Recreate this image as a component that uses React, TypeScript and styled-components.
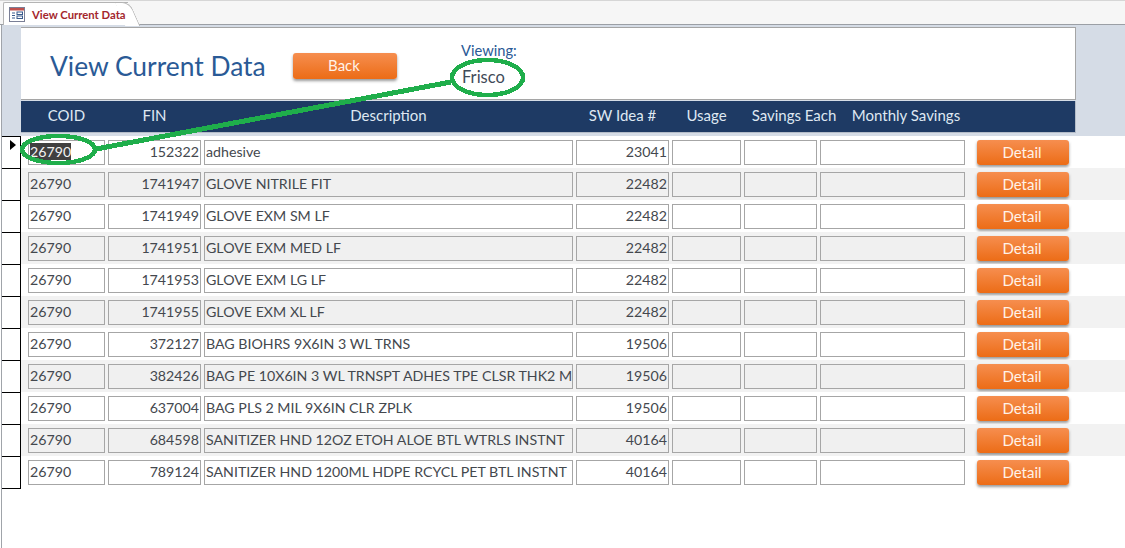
import React from 'react';
import styled, { createGlobalStyle } from 'styled-components';

const GlobalStyle = createGlobalStyle`
  html, body { margin: 0; padding: 0; background: #fff; }
  body { font-family: Lato, "Open Sans", "Liberation Sans", sans-serif; overflow: hidden; }
`;

const COLUMNS = '77px 93px 369px 93px 69px 73px 145px 92px';
const NAV_COLUMNS = '77px 93px 369px 93px 69px 100px 118px';

const Page = styled.div`
  position: relative;
  width: 1125px;
  height: 548px;
  overflow: hidden;
  background: #fff;
`;

const TabStrip = styled.div`
  height: 25px;
  box-sizing: border-box;
  padding: 1px 0 0 3px;
  background: #f6f6f6;
  border-top: 1px solid #d6d6d6;
  border-bottom: 1px solid #9b9fa5;
  display: flex;
  align-items: flex-start;
`;

const Tab = styled.div`
  position: relative;
  width: 125px;
  height: 23px;
  box-sizing: border-box;
  padding-left: 5px;
  display: flex;
  align-items: center;
  gap: 7px;
  background: #fff;
  border: 1px solid #b4b4b4;
  border-right: none;
  border-bottom: none;
  border-radius: 2px 0 0 0;
  color: #a4262c;
  font-size: 11.3px;
  font-weight: 700;
  white-space: nowrap;

  &::after {
    content: '';
    position: absolute;
    top: -1px;
    right: -7px;
    width: 14px;
    height: 23px;
    background: #fff;
    border-top: 1px solid #b4b4b4;
    border-right: 1px solid #b4b4b4;
    border-top-right-radius: 8px;
    transform: skewX(24deg);
    z-index: 0;
  }
`;

const TabText = styled.span`
  position: relative;
  z-index: 1;
`;

const Body = styled.div`
  margin-left: 1px;
  border-left: 1px solid #a0a4aa;
  height: 523px;
`;

const HeaderBand = styled.div`
  background: #d5dce6;
  padding: 2px 49px 3px 19px;
`;

const FormHeader = styled.div`
  height: 73px;
  box-sizing: border-box;
  background: #fff;
  border: 1px solid #a5a5a5;
  border-left: none;
  padding-left: 29px;
  display: flex;
  align-items: center;
`;

const Title = styled.h1`
  margin: 5px 0 0;
  width: 243px;
  font-size: 26.4px;
  font-weight: 400;
  color: #2a5a96;
  white-space: nowrap;
`;

const OrangeButton = styled.button<{ $wide?: boolean }>`
  width: ${p => (p.$wide ? 104 : 92)}px;
  height: ${p => (p.$wide ? 26 : 25)}px;
  padding: 0 2px 2px 0;
  border: none;
  border-radius: 3px;
  background: linear-gradient(#f68e4f, #ec6c16);
  box-shadow: 0 2px 3px rgba(70, 70, 70, 0.55);
  color: #fff2e8;
  font-family: inherit;
  font-size: 15px;
`;

const BackButton = styled(OrangeButton)`
  margin-top: 4px;
`;

const Viewing = styled.div`
  margin-left: 64px;
  display: flex;
  flex-direction: column;
  gap: 8px;
`;

const ViewingLabel = styled.span`
  font-size: 14.7px;
  color: #2a5a96;
`;

const ViewingValue = styled.span`
  margin-left: 1px;
  font-size: 16.5px;
  color: #3f4a58;
`;

const NavBar = styled.div`
  height: 32px;
  box-sizing: border-box;
  margin-top: 1px;
  padding: 0 0 3px 7px;
  background: #1e3a64;
  border-right: 1px solid #b4bcc8;
  border-bottom: 1px solid #b4bcc8;
  display: grid;
  grid-template-columns: ${NAV_COLUMNS};
  column-gap: 3px;
  align-items: center;
  color: #dfe8f2;
  font-size: 15px;
`;

const NavLabel = styled.span`
  text-align: center;
  white-space: nowrap;
`;

const Row = styled.div`
  display: flex;
  height: 32px;
`;

const Selector = styled.div`
  width: 19px;
  flex: none;
  box-sizing: border-box;
  border-top: 1px solid #000;
  border-right: 1px solid #000;
  display: flex;
  padding-top: 3px;
`;

const Arrow = styled.div`
  width: 0;
  height: 0;
  margin-left: 8px;
  border-left: 6px solid #000;
  border-top: 5px solid transparent;
  border-bottom: 5px solid transparent;
`;

const SelectorEnd = styled.div`
  width: 19px;
  height: 1px;
  background: #000;
`;

const Cells = styled.div<{ $alt: boolean }>`
  flex: 1;
  box-sizing: border-box;
  padding: 4px 0 0 7px;
  background: ${p => (p.$alt ? '#f2f2f2' : '#fff')};
  display: grid;
  grid-template-columns: ${COLUMNS};
  grid-template-rows: 25px;
  column-gap: 3px;
`;

const Field = styled.div<{ $alt: boolean; $right?: boolean }>`
  box-sizing: border-box;
  padding: 0 1px;
  background: ${p => (p.$alt ? '#f0f0f0' : '#fff')};
  border: 1px solid #a6a6a6;
  color: #44484e;
  font-size: 14.2px;
  line-height: 22px;
  text-align: ${p => (p.$right ? 'right' : 'left')};
  white-space: nowrap;
  overflow: hidden;
`;

const Selected = styled.span`
  background: #404040;
  color: #f2f2f2;
`;

const DetailButton = styled(OrangeButton)`
  margin-left: 9px;
`;

const Annotation = styled.svg`
  position: absolute;
  left: 0;
  top: 0;
  pointer-events: none;
`;

const rows: [string, string, string][] = [
  ['152322', 'adhesive', '23041'],
  ['1741947', 'GLOVE NITRILE FIT', '22482'],
  ['1741949', 'GLOVE EXM SM LF', '22482'],
  ['1741951', 'GLOVE EXM MED LF', '22482'],
  ['1741953', 'GLOVE EXM LG LF', '22482'],
  ['1741955', 'GLOVE EXM XL LF', '22482'],
  ['372127', 'BAG BIOHRS 9X6IN 3 WL TRNS', '19506'],
  ['382426', 'BAG PE 10X6IN 3 WL TRNSPT ADHES TPE CLSR THK2 MIL', '19506'],
  ['637004', 'BAG PLS 2 MIL 9X6IN CLR ZPLK', '19506'],
  ['684598', 'SANITIZER HND 12OZ ETOH ALOE BTL WTRLS INSTNT', '40164'],
  ['789124', 'SANITIZER HND 1200ML HDPE RCYCL PET BTL INSTNT', '40164'],
];

const labels = ['COID', 'FIN', 'Description', 'SW Idea #', 'Usage', 'Savings Each', 'Monthly Savings'];

const FormIcon = () => (
  <svg width="16" height="15" viewBox="0 0 16 15">
    <rect x="0.5" y="0.5" width="15" height="14" fill="#fff" stroke="#7a7f96" />
    <rect x="1" y="1" width="14" height="2.5" fill="#c0504d" />
    <path d="M3 6h3M3 8.5h3M3 11h3" stroke="#3a5a8c" />
    <rect x="8" y="5" width="5.5" height="2.5" fill="#fff" stroke="#3a5a8c" />
    <rect x="8" y="9" width="5.5" height="2.5" fill="#fff" stroke="#3a5a8c" />
  </svg>
);

export default function App() {
  return (
    <Page>
      <GlobalStyle />
      <TabStrip>
        <Tab>
          <FormIcon />
          <TabText>View Current Data</TabText>
        </Tab>
      </TabStrip>
      <Body>
        <HeaderBand>
          <FormHeader>
            <Title>View Current Data</Title>
            <BackButton $wide>Back</BackButton>
            <Viewing>
              <ViewingLabel>Viewing:</ViewingLabel>
              <ViewingValue>Frisco</ViewingValue>
            </Viewing>
          </FormHeader>
          <NavBar>
            {labels.map(label => <NavLabel key={label}>{label}</NavLabel>)}
          </NavBar>
        </HeaderBand>
        {rows.map(([fin, description, idea], i) => {
          const alt = i % 2 === 1;
          return (
            <Row key={fin}>
              <Selector>{i === 0 && <Arrow />}</Selector>
              <Cells $alt={alt}>
                <Field $alt={alt}>{i === 0 ? <Selected>26790</Selected> : '26790'}</Field>
                <Field $alt={alt} $right>{fin}</Field>
                <Field $alt={alt}>{description}</Field>
                <Field $alt={alt} $right>{idea}</Field>
                <Field $alt={alt} />
                <Field $alt={alt} />
                <Field $alt={alt} />
                <DetailButton>Detail</DetailButton>
              </Cells>
            </Row>
          );
        })}
        <SelectorEnd />
      </Body>
      <Annotation width="1125" height="548" viewBox="0 0 1125 548" shapeRendering="crispEdges">
        <g fill="none" stroke="#1fae4b">
          <ellipse cx="58.5" cy="149.5" rx="36.5" ry="13.5" strokeWidth="4.5" />
          <ellipse cx="487.5" cy="77.5" rx="35.5" ry="17.5" strokeWidth="4.5" />
          <path d="M96 149 L451 82" strokeWidth="5" />
        </g>
      </Annotation>
    </Page>
  );
}
